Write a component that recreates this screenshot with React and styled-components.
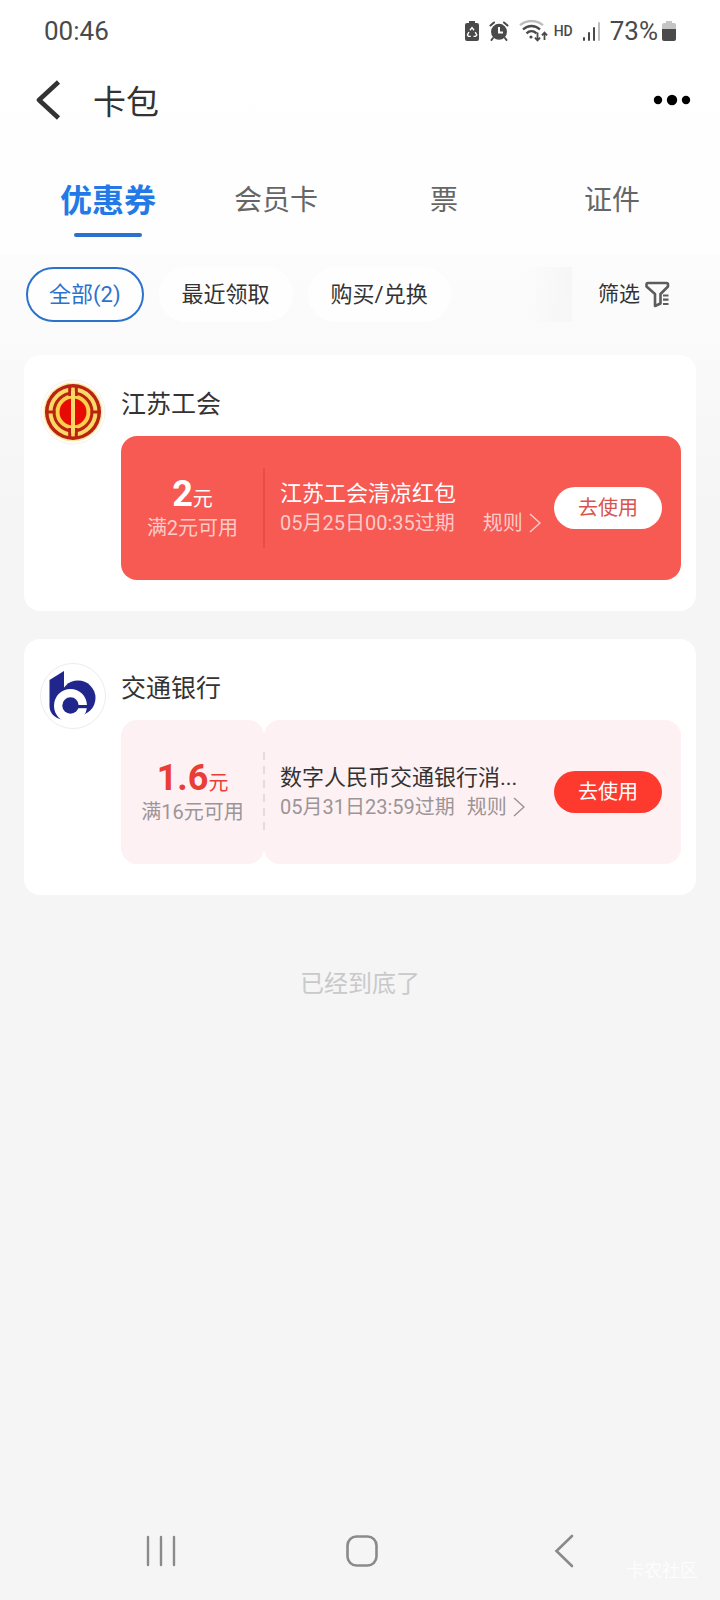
import React, { useState } from "react";
import styled, { createGlobalStyle, css } from "styled-components";

const GlobalStyle = createGlobalStyle`
  * {
    box-sizing: border-box;
  }
  body {
    margin: 0;
    background: #f5f5f5;
    font-family: Roboto, "Noto Sans CJK SC", sans-serif;
    color: #333;
  }
  button {
    padding: 0;
    border: none;
    background: none;
    font-family: inherit;
    color: inherit;
    cursor: pointer;
  }
  svg {
    display: block;
    flex-shrink: 0;
  }
`;

const Page = styled.div`
  display: flex;
  flex-direction: column;
  min-height: 100vh;
  background: linear-gradient(#fff 0, #fefefe 254px, #fcfcfc 256px, #fafafa 350px, #f5f5f5 500px);
`;

const StatusBar = styled.div`
  display: flex;
  align-items: center;
  justify-content: space-between;
  height: 62px;
  padding: 0 44px;
  font-size: 26px;
  color: #4a4a4a;
`;

const StatusIcons = styled.div`
  display: flex;
  align-items: center;
`;

const LeadingIcons = styled.div`
  display: flex;
  align-items: center;
  gap: 10px;
`;

const Hd = styled.span`
  margin: 0 10px 0 6px;
  font-size: 14px;
  font-weight: 500;
`;

const Percent = styled.span`
  margin: 0 4px 0 9px;
`;

const Header = styled.header`
  display: flex;
  align-items: center;
  height: 76px;
  padding: 0 29px 0 36px;
`;

const Title = styled.h1`
  flex: 1;
  margin: 0 0 0 32px;
  padding-top: 6px;
  font-size: 33px;
  font-weight: 400;
  line-height: 48px;
`;

const Tabs = styled.nav`
  display: flex;
  padding: 35px 24px 0;
`;

const Tab = styled.button`
  flex: 1;
  display: flex;
  flex-direction: column;
  align-items: center;
  gap: 4px;
  height: 81px;
  line-height: 56px;
  font-size: 28px;
  color: #666;

  ${({ $active }) =>
    $active &&
    css`
      font-size: 32px;
      font-weight: 700;
      color: #2379e6;

      &::after {
        content: "";
        width: 68px;
        height: 4px;
        border-radius: 2px;
        background: #2b72cc;
      }
    `}
`;

const FilterBar = styled.div`
  display: flex;
  align-items: center;
  padding: 13px 50px 33px 26px;
`;

const Chips = styled.div`
  position: relative;
  flex: 1;
  display: flex;
  gap: 15px;
  overflow: hidden;

  &::after {
    content: "";
    position: absolute;
    top: 0;
    right: 0;
    width: 48px;
    height: 100%;
    background: linear-gradient(90deg, rgba(245, 245, 245, 0), #f6f6f6);
  }
`;

const Chip = styled.button`
  height: 55px;
  padding: 0 21px 6px;
  border: 2px solid ${({ $active }) => ($active ? "#2b72cc" : "#fefefe")};
  border-radius: 28px;
  background: #fefefe;
  font-size: 22px;
  white-space: nowrap;
  color: ${({ $active }) => ($active ? "#2b72cc" : "#333")};
`;

const FilterButton = styled.button`
  display: flex;
  align-items: center;
  gap: 5px;
  margin-left: 26px;
  padding-bottom: 1px;
  font-size: 21px;
  line-height: 28px;
`;

const List = styled.main`
  display: flex;
  flex-direction: column;
  gap: 28px;
  padding: 0 24px;
`;

const Card = styled.section`
  display: flex;
  gap: 15px;
  padding: 24px 15px 31px 16px;
  border-radius: 16px;
  background: #fff;
`;

const CardBody = styled.div`
  flex: 1;
  min-width: 0;
`;

const Merchant = styled.h2`
  margin: 0 0 5px;
  font-size: 25px;
  font-weight: 400;
  line-height: 52px;
`;

const Coupon = styled.div`
  display: flex;
  height: 144px;
  border-radius: 16px;
  background: ${({ $solid }) => ($solid ? "#f75953" : "#fff")};
  color: ${({ $solid }) => ($solid ? "#fff" : "#333")};
`;

const Amount = styled.div`
  flex: 0 0 143px;
  display: flex;
  flex-direction: column;
  align-items: center;
  justify-content: center;
  border-radius: 16px;
  background: ${({ $solid }) => ($solid ? "none" : "#fdf1f3")};
`;

const Value = styled.div`
  padding-top: 4px;
  font-size: 20px;
  line-height: 30px;
  color: ${({ $solid }) => ($solid ? "#fff" : "#e93d35")};

  strong {
    font-size: 36px;
    font-weight: 700;
  }
`;

const Muted = styled.div`
  font-size: 20px;
  line-height: 28px;
  color: ${({ $solid }) => ($solid ? "#fdcbc8" : "#9b9597")};
`;

const Detail = styled.div`
  position: relative;
  flex: 1;
  min-width: 0;
  display: flex;
  align-items: center;
  gap: 14px;
  padding: 0 19px 0 16px;
  border-radius: 16px;
  background: ${({ $solid }) => ($solid ? "none" : "#fdf1f3")};

  &::before {
    content: "";
    position: absolute;
    left: -1px;
    top: 32px;
    bottom: 32px;
    width: 2px;
    background: ${({ $solid }) =>
      $solid ? "#e94d48" : "repeating-linear-gradient(#e6dadc 0 8px, transparent 8px 14px)"};
  }
`;

const Info = styled.div`
  flex: 1;
  min-width: 0;
`;

const CouponTitle = styled.div`
  font-size: 22px;
  line-height: 30px;
  white-space: nowrap;
`;

const Meta = styled(Muted)`
  display: flex;
  align-items: center;
  gap: ${({ $wide }) => ($wide ? "28px" : "12px")};
  white-space: nowrap;
`;

const RuleButton = styled.button`
  display: flex;
  align-items: center;
  gap: 6px;
  font-size: 20px;
  line-height: 28px;
`;

const UseButton = styled.button`
  flex: 0 0 108px;
  height: 42px;
  padding-bottom: 4px;
  border-radius: 21px;
  background: ${({ $solid }) => ($solid ? "#fff" : "#fe3a2e")};
  font-size: 20px;
  color: ${({ $solid }) => ($solid ? "#d9544e" : "#fff")};
`;

const ListEnd = styled.p`
  margin: 71px 0 0;
  text-align: center;
  font-size: 24px;
  line-height: 36px;
  color: #c9c9c9;
`;

const NavBar = styled.footer`
  position: relative;
  display: flex;
  justify-content: space-around;
  align-items: center;
  height: 98px;
  margin-top: auto;
  padding: 0 55px 0 60px;
`;

const NavButton = styled.button`
  width: 60px;
  display: flex;
  justify-content: center;
`;

const Watermark = styled.span`
  position: absolute;
  right: 22px;
  bottom: 18px;
  font-size: 18px;
  color: #fdfdfd;
`;

const BatterySaverIcon = () => (
  <svg width="14" height="20" viewBox="0 0 14 20" fill="#4a4a4a">
    <path d="M4 0h6v2h2a2 2 0 0 1 2 2v14a2 2 0 0 1-2 2H2a2 2 0 0 1-2-2V4a2 2 0 0 1 2-2h2z" />
    <path
      d="M5 9.2 7 6.6l2 2.6M10.2 11l1.6 3-1.3 1.4h-2M5.8 15.4H3.4l-1-1.4 1.5-3"
      fill="none"
      stroke="#fff"
      strokeWidth="1.4"
    />
  </svg>
);

const AlarmIcon = () => (
  <svg width="20" height="20" viewBox="0 0 20 20">
    <path
      d="M1.5 4.5 5 1.5M18.5 4.5 15 1.5M4 17l-1.5 2M16 17l1.5 2"
      stroke="#4a4a4a"
      strokeWidth="2"
      strokeLinecap="round"
    />
    <circle cx="10" cy="10.8" r="8" fill="#4a4a4a" />
    <path d="M10 6v5.4h4" fill="none" stroke="#fff" strokeWidth="2" />
  </svg>
);

const WifiIcon = () => (
  <svg width="29" height="22" viewBox="0 0 29 22" fill="none" strokeWidth="2.4">
    <path d="M1 5.2C7-.4 18-.4 24 5.2" stroke="#bdbdbd" />
    <path d="M4 9.5c5-4.7 12-4.7 17 0M7.5 13.3c3-2.8 7-2.8 10 0" stroke="#4a4a4a" />
    <circle cx="12" cy="17" r="1.6" fill="#4a4a4a" />
    <path
      d="M18.5 12.5v8m-2.6-2.8 2.6 2.8 2.6-2.8M25.5 20v-7.5m-2.6 2.8 2.6-2.8 2.6 2.8"
      stroke="#4a4a4a"
      strokeWidth="1.8"
    />
  </svg>
);

const SignalIcon = () => (
  <svg width="18" height="20" viewBox="0 0 18 20" fill="#4a4a4a">
    <rect x="0" y="16" width="2" height="4" rx="1" />
    <rect x="5" y="11" width="2" height="9" rx="1" />
    <rect x="10" y="6" width="2" height="14" rx="1" />
    <rect x="15" y="1" width="2" height="19" rx="1" fill="#bdbdbd" />
  </svg>
);

const BatteryIcon = () => (
  <svg width="14" height="20" viewBox="0 0 14 20">
    <path d="M4 0h6v2h2a2 2 0 0 1 2 2v4H0V4a2 2 0 0 1 2-2h2z" fill="#c4c4c4" />
    <path d="M0 8h14v10a2 2 0 0 1-2 2H2a2 2 0 0 1-2-2z" fill="#4a4a4a" />
  </svg>
);

const BackIcon = () => (
  <svg width="25" height="40" viewBox="0 0 25 40" fill="none" stroke="#333" strokeWidth="4.6">
    <path d="M22.5 2 3 20l19.5 18" strokeLinejoin="round" />
  </svg>
);

const MoreIcon = () => (
  <svg width="38" height="12" viewBox="0 0 38 12">
    <circle cx="5" cy="6" r="4.2" />
    <circle cx="19" cy="6" r="5.2" />
    <circle cx="33" cy="6" r="4.2" />
  </svg>
);

const FunnelIcon = () => (
  <svg width="25" height="27" viewBox="0 0 25 27" fill="none" stroke="#5c5c5c" strokeWidth="2.6" strokeLinejoin="round">
    <path d="M3 2h18.5A1.500 1.500 0 0 1 23 3.500v2L15.500 13v9.500L10 25V13L1.500 5.500v-2A1.500 1.500 0 0 1 3 2z" />
    <path d="M18 14.5h5.500M18 18.700h5.500M18 23h5.500" strokeWidth="2.2" />
  </svg>
);

const ArrowIcon = () => (
  <svg width="12" height="20" viewBox="0 0 12 20" fill="none" stroke="currentColor" strokeWidth="1.5">
    <path d="M1 1l10 9-10 9" />
  </svg>
);

const UnionLogo = () => (
  <svg width="66" height="66" viewBox="0 0 66 66" fill="none">
    <circle cx="33" cy="33" r="32" fill="#fffdf6" stroke="#f6f3ee" />
    <circle cx="33" cy="33" r="29.5" fill="#fbe9a8" />
    <circle cx="33" cy="33" r="28" fill="#b92412" />
    <circle cx="33" cy="33" r="22.5" stroke="#fbd968" strokeWidth="4" />
    <circle cx="33" cy="33" r="15.5" fill="#e80a05" stroke="#fbd04c" strokeWidth="4" />
    <path d="M5 33h10.5M50.5 33H61" stroke="#b92412" strokeWidth="3" />
    <path d="M29.7 8v9M36.3 8v9M29.7 49v9M36.3 49v9" stroke="#b92412" strokeWidth="3" />
    <path d="M33 12v42" stroke="#fbd968" strokeWidth="4" />
  </svg>
);

const BankLogo = () => (
  <svg width="66" height="66" viewBox="0 0 66 66" fill="#20268c">
    <circle cx="33" cy="33" r="32.5" fill="#fff" stroke="#ececec" />
    <circle cx="38" cy="35" r="17.5" />
    <path d="M9.5 17 24 8v20l-2 28.5c-8-1.5-12.5-7-12.500-13.500z" />
    <path d="M22 57c-5-3-8-8-8-14.5a16.5 16.5 0 0 1 33 0c0 2.500-.5 4.500-1.500 7.500L38 60z" fill="#fff" />
    <circle cx="30.5" cy="42.5" r="8.2" />
    <path d="M36 42h12v3.2H36z" />
  </svg>
);

const tabs = ["优惠券", "会员卡", "票", "证件"];
const filters = ["全部(2)", "最近领取", "购买/兑换"];

const coupons = [
  {
    merchant: "江苏工会",
    Logo: UnionLogo,
    value: "2",
    condition: "满2元可用",
    title: "江苏工会清凉红包",
    expires: "05月25日00:35过期",
    solid: true,
  },
  {
    merchant: "交通银行",
    Logo: BankLogo,
    value: "1.6",
    condition: "满16元可用",
    title: "数字人民币交通银行消...",
    expires: "05月31日23:59过期",
    solid: false,
  },
];

const CouponCard = ({ merchant, Logo, value, condition, title, expires, solid }) => (
  <Card>
    <Logo />
    <CardBody>
      <Merchant>{merchant}</Merchant>
      <Coupon $solid={solid}>
        <Amount $solid={solid}>
          <Value $solid={solid}>
            <strong>{value}</strong>元
          </Value>
          <Muted $solid={solid}>{condition}</Muted>
        </Amount>
        <Detail $solid={solid}>
          <Info>
            <CouponTitle>{title}</CouponTitle>
            <Meta $solid={solid} $wide={solid}>
              <span>{expires}</span>
              <RuleButton>
                规则
                <ArrowIcon />
              </RuleButton>
            </Meta>
          </Info>
          <UseButton $solid={solid}>去使用</UseButton>
        </Detail>
      </Coupon>
    </CardBody>
  </Card>
);

const App = () => {
  const [tab, setTab] = useState(0);
  const [filter, setFilter] = useState(0);

  return (
    <Page>
      <GlobalStyle />
      <StatusBar>
        <span>00:46</span>
        <StatusIcons>
          <LeadingIcons>
            <BatterySaverIcon />
            <AlarmIcon />
            <WifiIcon />
          </LeadingIcons>
          <Hd>HD</Hd>
          <SignalIcon />
          <Percent>73%</Percent>
          <BatteryIcon />
        </StatusIcons>
      </StatusBar>
      <Header>
        <button aria-label="返回">
          <BackIcon />
        </button>
        <Title>卡包</Title>
        <button aria-label="更多">
          <MoreIcon />
        </button>
      </Header>
      <Tabs>
        {tabs.map((name, i) => (
          <Tab key={name} $active={i === tab} onClick={() => setTab(i)}>
            {name}
          </Tab>
        ))}
      </Tabs>
      <FilterBar>
        <Chips>
          {filters.map((name, i) => (
            <Chip key={name} $active={i === filter} onClick={() => setFilter(i)}>
              {name}
            </Chip>
          ))}
        </Chips>
        <FilterButton>
          筛选
          <FunnelIcon />
        </FilterButton>
      </FilterBar>
      <List>
        {coupons.map((coupon) => (
          <CouponCard key={coupon.merchant} {...coupon} />
        ))}
      </List>
      <ListEnd>已经到底了</ListEnd>
      <NavBar>
        <NavButton aria-label="最近任务">
          <svg width="30" height="32" viewBox="0 0 30 32" stroke="#8a8a8a" strokeWidth="2.4" strokeLinecap="round">
            <path d="M2 2v28M15 2v28M28 2v28" />
          </svg>
        </NavButton>
        <NavButton aria-label="主屏幕">
          <svg width="32" height="32" viewBox="0 0 32 32" fill="none" stroke="#8a8a8a" strokeWidth="2.6">
            <rect x="1.5" y="1.5" width="29" height="29" rx="9" />
          </svg>
        </NavButton>
        <NavButton aria-label="返回上一页">
          <svg width="20" height="34" viewBox="0 0 20 34" fill="none" stroke="#8a8a8a" strokeWidth="2.6" strokeLinecap="round">
            <path d="M18 2 2.5 17 18 32" />
          </svg>
        </NavButton>
        <Watermark>卡农社区</Watermark>
      </NavBar>
    </Page>
  );
};

export default App;
